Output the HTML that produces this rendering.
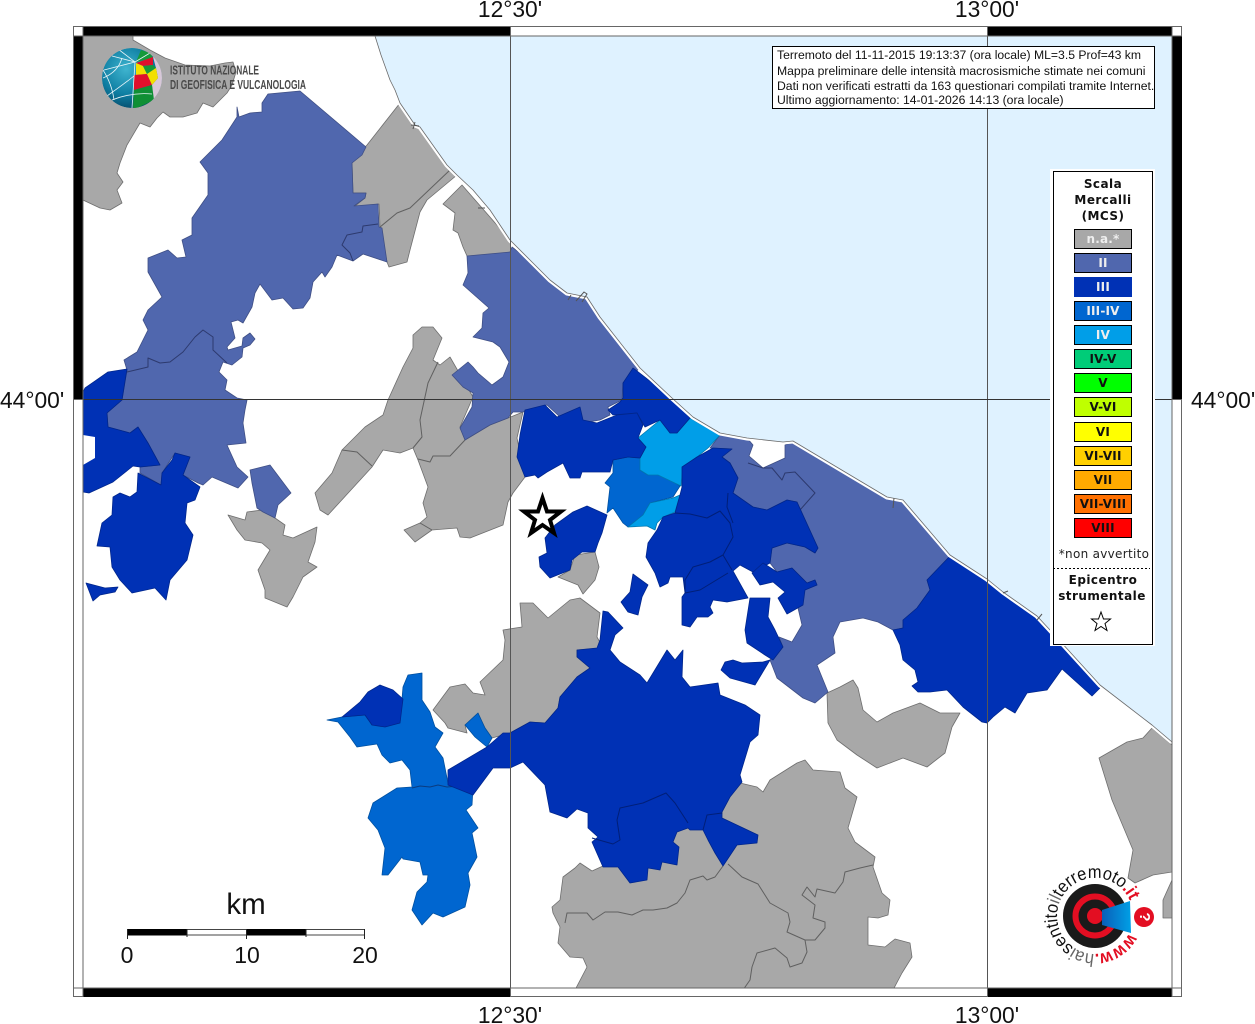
<!DOCTYPE html>
<html>
<head>
<meta charset="utf-8">
<title>Mappa intensità macrosismiche</title>
<style>
html,body{margin:0;padding:0;background:#fff;}
svg{display:block;}
.deg{font-family:"Liberation Sans",sans-serif;font-size:22.8px;fill:#111;}
.info{font-family:"Liberation Sans",sans-serif;font-size:12.2px;fill:#111;}
.leg{font-family:"DejaVu Sans",sans-serif;font-size:12px;font-weight:bold;fill:#111;text-anchor:middle;letter-spacing:.45px;}
.sw{font-family:"DejaVu Sans",sans-serif;font-size:12px;font-weight:bold;text-anchor:middle;fill:#111;letter-spacing:.2px;}
.g{fill:#a8a8a8;stroke:#6e6e6e;stroke-width:.8;stroke-linejoin:round;}
.b2{fill:#5067ae;stroke:#3f4f85;stroke-width:.8;stroke-linejoin:round;}
.b3{fill:#0031b5;stroke:#00268c;stroke-width:.8;stroke-linejoin:round;}
.b34{fill:#0066d0;stroke:#0050a0;stroke-width:.8;stroke-linejoin:round;}
.b4{fill:#009ee8;stroke:#0078b0;stroke-width:.8;stroke-linejoin:round;}
.lg{fill:none;stroke:#606060;stroke-width:1;stroke-linejoin:round;}
.l2{fill:none;stroke:#2d3a6e;stroke-width:1;stroke-linejoin:round;}
.l3{fill:none;stroke:#001f78;stroke-width:1;stroke-linejoin:round;}
</style>
</head>
<body>
<svg width="1255" height="1024" viewBox="0 0 1255 1024" xmlns="http://www.w3.org/2000/svg">
<defs>
<clipPath id="mapclip"><rect x="83" y="36" width="1089" height="952"/></clipPath>
<clipPath id="globe"><circle cx="132" cy="78" r="30"/></clipPath>
<radialGradient id="gb" cx=".4" cy=".35" r=".75">
<stop offset="0" stop-color="#3fb4cf"/><stop offset=".55" stop-color="#0f7fa3"/><stop offset="1" stop-color="#04405f"/>
</radialGradient>
<linearGradient id="cone" x1="0" x2="1" y1="0" y2="0">
<stop offset="0" stop-color="#0a5fb8"/><stop offset="1" stop-color="#00a0e6"/>
</linearGradient>
<path id="arc" d="M1129 933 A38 38 0 1 1 1130 901"/>
</defs>
<rect width="1255" height="1024" fill="#fff"/>
<g clip-path="url(#mapclip)">
<!-- gray NW -->
<polygon class="g" points="83,36 133,36 133,40 150,50 165,58 185,65 210,66 225,63 233,62 236,72 232,85 227,93 213,107 203,103 197,113 183,117 170,117 163,112 157,118 150,127 140,123 127,145 120,163 117,173 123,182 117,190 122,203 110,210 100,208 83,200"/>
<!-- gray N -->
<polygon class="g" points="400,103 367,145 365,147 352,163 353,193 366,193 365,198 354,207 379,204 380,227 387,262 389,267 407,262 410,250 420,212 427,200 457,175 447,165 420,127 415,125"/>
<polyline class="lg" points="380,227 397,213 410,208 450,170"/>
<polygon class="g" points="443,204 462,185 510,240 511,252 493,255 467,256 463,247 458,233 453,230 455,213"/>
<!-- gray central -->
<polygon class="g" points="413,335 422,327 433,327 442,338 433,360 440,365 450,357 473,397 460,427 465,440 490,425 508,418 523,412 517,438 525,477 513,493 508,502 503,525 470,538 460,537 457,528 432,530 415,542 404,530 420,523 427,517 423,503 428,487 418,460 413,448 400,453 383,450 372,467 328,515 320,510 315,493 332,473 342,450 365,427 383,415 388,400 403,367 413,348"/>
<polyline class="lg" points="438,362 428,383 420,420 422,437 413,448"/>
<polyline class="lg" points="418,459 430,462 433,456 450,456 465,440"/>
<polyline class="lg" points="342,450 357,452 372,466"/>
<polyline class="lg" points="420,523 432,530"/>
<!-- gray SW small -->
<polygon class="g" points="228,515 245,520 247,512 262,510 275,518 285,525 283,535 293,538 317,527 315,542 308,562 317,567 303,577 293,597 287,607 265,598 265,590 258,570 270,550 262,543 245,540 237,530"/>
<!-- gray centre S -->
<polygon class="g" points="520,603 533,603 548,618 570,600 580,598 600,613 597,637 603,648 577,650 577,657 590,668 577,677 560,697 558,708 545,723 530,722 510,733 492,738 485,728 478,713 465,725 467,733 448,728 445,723 433,710 450,687 465,684 473,693 485,695 480,682 503,660 505,640 503,630 522,627"/>
<polygon class="g" points="558,577 570,570 575,555 595,552 599,567 595,580 583,594 578,585"/>
<!-- gray S-central -->
<polygon class="g" points="827,693 840,687 853,680 858,688 863,710 877,722 893,713 920,703 940,713 960,713 952,727 945,753 927,767 903,758 877,768 857,755 837,740 828,723"/>
<!-- gray S -->
<polygon class="g" points="740,783 757,787 763,792 770,780 797,763 805,760 813,770 840,772 845,788 857,797 848,828 855,842 875,857 873,867 882,893 890,900 888,915 878,918 868,917 868,945 885,947 895,939 910,943 912,957 902,973 893,990 575,990 587,967 583,958 570,957 558,943 560,927 553,913 552,907 560,900 563,877 575,868 580,863 592,871 603,866 620,850 700,820"/>
<polyline class="lg" points="723,866 715,877 707,880 703,876 690,880 685,893 677,903 667,908 653,910 643,910 632,915 618,912 605,912 593,920 587,913 567,913 565,923"/>
<polyline class="lg" points="728,864 742,877 758,884 770,903 788,913 790,922 787,932 805,940 815,940 825,928 825,922 813,918 815,905 802,895 807,887 815,897 817,889 835,893 843,882 845,872 860,868 873,865"/>
<polyline class="lg" points="805,940 807,952 802,963 790,967 787,958 775,948 757,953 752,967 750,980 743,990"/>
<!-- gray SE -->
<polygon class="g" points="1152,728 1172,745 1172,872 1153,875 1135,883 1128,878 1133,850 1112,800 1099,758 1127,742 1143,738"/>
<polygon class="g" points="1172,880 1163,900 1163,918 1172,918"/>
<!-- II big NW -->
<polygon class="b2" points="268,94 300,91 366,147 362,155 352,163 353,193 366,193 365,198 354,206 378,204 379,227 382,228 387,262 363,254 353,261 337,255 332,267 325,277 322,272 313,282 310,298 303,308 293,309 283,298 272,300 260,284 255,293 252,307 243,323 238,320 231,322 235,338 227,347 228,350 242,346 243,338 250,333 255,339 250,345 243,348 242,357 232,365 223,362 219,372 227,380 225,390 237,398 247,400 245,410 243,423 246,443 227,445 237,467 248,477 238,488 212,477 203,485 198,483 183,475 190,457 175,453 162,473 161,485 140,473 140,467 160,465 148,443 138,427 130,433 108,427 107,413 122,400 127,370 124,360 137,352 148,330 143,320 148,310 162,297 148,272 148,258 168,250 177,258 186,257 182,240 192,235 192,218 208,195 208,173 200,162 222,140 237,117 237,107 239,117 250,113 262,112 262,103"/>
<polyline class="l2" points="127,372 148,367 148,358 160,363 170,362 183,352 195,337 203,330 213,337 213,350 227,363"/>
<polyline class="l2" points="378,224 363,226 362,232 347,235 342,245 350,253 353,261"/>
<polygon class="b2" points="250,470 270,465 291,493 278,505 275,518 263,512 257,508 252,483"/>
<!-- II coast -->
<polygon class="b2" points="467,256 510,252 512,247 533,263 550,280 567,293 587,297 600,317 640,368 623,383 622,400 608,407 610,415 600,420 583,423 580,408 560,417 547,405 523,412 513,412 508,418 490,425 465,440 460,428 472,407 473,393 463,387 452,375 468,362 473,367 478,373 492,385 503,377 509,362 500,347 493,342 473,337 482,328 483,313 489,308 463,285 468,273"/>
<!-- II east -->
<polygon class="b2" points="720,435 747,438 753,445 749,456 763,468 785,458 785,445 793,442 887,498 903,500 950,556 927,580 930,590 917,608 903,620 903,628 893,630 878,622 863,618 840,622 833,637 835,653 817,665 828,692 815,703 803,698 777,678 770,660 783,647 779,637 792,642 802,625 798,608 803,590 817,585 815,580 807,583 792,568 777,572 770,563 772,548 787,543 805,547 815,553 818,548 797,502 787,500 767,510 753,507 733,493 738,478 730,463 722,457 732,449 710,448"/>
<polyline class="l2" points="748,463 763,468 772,468 782,480 785,473 795,472 815,493 800,510"/>
<!-- III-IV west -->
<polygon class="b34" points="327,720 342,717 365,715 372,725 400,723 403,687 408,675 422,673 422,700 430,712 435,727 443,733 435,747 443,758 448,783 473,788 472,805 466,810 478,828 472,833 477,857 468,873 470,885 465,907 443,917 433,913 422,925 412,910 417,892 427,882 428,875 423,875 420,862 403,859 402,857 388,875 382,875 385,848 378,830 368,818 373,803 397,788 412,787 410,770 402,760 390,763 382,755 377,744 357,747 350,737 338,722"/>
<polyline class="l2" points="412,788 420,786 430,787 438,785 447,787 460,786 472,789" style="stroke:#0a3c80"/>
<polygon class="b34" points="465,725 478,713 485,728 492,738 487,747 475,737"/>
<!-- III-IV centre -->
<polygon class="b34" points="628,457 640,458 640,470 648,475 658,472 680,486 673,497 650,503 643,515 628,527 623,523 613,508 607,513 610,487 605,483 613,473 613,460"/>
<!-- IV -->
<polygon class="b4" points="638,438 660,420 670,433 677,433 690,418 720,435 708,448 697,457 683,467 681,486 658,475 648,475 640,470 640,458 646,447"/>
<polygon class="b4" points="628,527 643,515 650,503 673,498 680,495 675,512 663,517 657,523 655,530 647,526"/>
<!-- III all -->
<polygon class="b3" points="127,369 108,372 85,388 83,392 83,492 89,493 113,482 133,466 140,467 160,465 148,443 138,427 130,433 108,427 107,413 122,400"/>
<polygon fill="#fff" points="83,435 95,437 95,458 83,465"/>
<polygon class="b3" points="138,473 161,485 162,473 172,460 175,453 190,457 183,475 200,487 195,500 187,503 185,523 193,535 187,560 170,580 166,600 155,588 132,593 120,580 112,567 110,547 97,546 102,523 112,515 113,497 120,493 130,497 137,492"/>
<polygon class="b3" points="86,583 105,588 118,587 115,592 100,595 93,601"/>
<polygon class="b3" points="633,368 623,383 623,398 620,402 608,410 613,415 637,413 645,427 660,420 670,433 677,433 690,418 672,398"/>
<polygon class="b3" points="525,410 545,405 557,417 580,407 583,420 597,423 617,415 637,413 643,425 638,438 646,447 640,458 628,457 613,460 610,472 582,472 580,478 570,478 563,463 547,472 538,478 535,475 525,477 517,457 520,435"/>
<polygon class="b3" points="682,467 697,457 713,448 732,449 722,457 730,463 738,478 733,493 753,507 767,510 787,500 797,502 818,548 815,553 805,547 787,543 772,548 770,563 753,572 740,565 733,571 748,598 727,602 713,600 710,607 713,613 708,617 697,617 690,627 682,625 682,597 685,593 683,577 670,577 668,583 660,587 655,573 646,557 648,543 657,530 663,517 675,513 680,495 682,487"/>
<polyline class="l3" points="675,513 690,514 707,518 720,511 730,523 733,537 723,555 732,570"/>
<polyline class="l3" points="728,493 727,507 733,523"/>
<polyline class="l3" points="723,555 710,562 693,567 685,580 685,593 700,590 728,573"/>
<polygon class="b3" points="752,573 763,563 777,572 792,568 807,583 815,580 817,585 805,590 803,605 787,614 778,598 785,592 773,582 760,585"/>
<polygon class="b3" points="545,538 555,525 573,512 587,506 607,515 602,533 598,543 595,552 582,552 572,560 570,570 550,578 540,567 539,557 547,553"/>
<polygon class="b3" points="633,574 648,585 642,597 638,615 628,612 621,602 630,592"/>
<polygon class="b3" points="750,598 770,598 768,617 775,630 783,647 773,660 765,655 747,643 745,630"/>
<polygon class="b3" points="725,662 733,660 742,663 763,662 770,660 755,685 730,678 721,670"/>
<polygon class="b3" points="950,556 987,580 1003,593 1037,617 1101,687 1092,696 1062,669 1047,690 1027,693 1015,713 1005,707 993,717 987,723 982,722 963,707 947,690 930,692 918,692 912,686 918,682 915,670 903,660 900,645 893,630 903,628 903,620 917,608 930,590 927,580"/>
<!-- III west lobe -->
<polygon class="b3" points="342,717 360,702 368,692 380,685 393,690 403,699 400,723 385,727 372,725 365,715"/>
<!-- III south main -->
<polygon class="b3" points="603,611 608,612 623,628 615,635 610,650 620,662 640,675 647,683 667,650 675,660 683,650 682,677 690,687 718,683 720,695 745,705 760,715 758,735 750,742 740,775 742,782 730,797 722,812 722,818 758,835 757,843 737,845 723,866 715,853 708,840 703,830 690,830 688,828 677,832 673,842 679,847 677,865 662,862 660,870 648,868 647,880 630,883 618,867 603,867 592,842 598,837 588,828 588,813 577,809 567,818 550,812 545,785 523,762 510,768 493,768 473,795 448,785 448,770 487,747 503,733 510,733 530,722 545,723 558,708 560,697 577,677 590,668 577,657 577,650 597,648 600,640"/>
<polyline class="l3" points="592,838 613,844 620,840 617,820 620,808 643,803 666,793 675,803 688,823"/>
<polyline class="l3" points="707,815 722,813 707,815 703,830"/>
<!-- sea -->
<polyline points="375,36 381,55 390,80 395,90 400,103 415,125 420,127 447,165 457,175 473,190 490,210 510,240 533,263 550,280 567,293 587,297 600,317 640,368 672,398 693,417 720,433 747,438 783,442 793,441 887,497 903,500 950,555 987,579 1003,592 1037,616 1050,630 1100,685 1152,725 1172,742" fill="none" stroke="#fff" stroke-width="5"/>
<polygon points="375,36 381,55 390,80 395,90 400,103 415,125 420,127 447,165 457,175 473,190 490,210 510,240 533,263 550,280 567,293 587,297 600,317 640,368 672,398 693,417 720,433 747,438 783,442 793,441 887,497 903,500 950,555 987,579 1003,592 1037,616 1050,630 1100,685 1152,725 1172,742 1172,36" fill="#dff2ff" stroke="#6a6a6a" stroke-width=".8" stroke-linejoin="round"/>
<!-- harbours -->
<path d="M411 125l8 1M415 122l-2 7M478 208h7M568 300l3-5M576 301l8-9 3 2-5 8M894 498l-1 10M1003 593l5-2M1037 620l5-6" fill="none" stroke="#555" stroke-width="1"/>
<!-- grid -->
<path d="M510.500 36V988M987.500 36V988" stroke="#555" stroke-width="1" fill="none"/>
<path d="M83 399.500H1172" stroke="#333" stroke-width="1" fill="none"/>
</g>
<!-- frame -->
<rect x="73.500" y="26.500" width="1108" height="970" fill="none" stroke="#666" stroke-width="1"/>
<rect x="83" y="27" width="427" height="9" fill="#000"/>
<rect x="987" y="27" width="185" height="9" fill="#000"/>
<rect x="83" y="988" width="427" height="9" fill="#000"/>
<rect x="987" y="988" width="185" height="9" fill="#000"/>
<rect x="74" y="36" width="9" height="363" fill="#000"/>
<rect x="1172" y="36" width="10" height="363" fill="#000"/>
<path d="M83 27V997M1172 27V997M73 36H1182M73 988H1182M510.500 27V36M987.500 27V36M510.500 988V997M987.500 988V997M74 399.500H83M1172 399.500H1182" stroke="#666" stroke-width="1" fill="none"/>
<!-- degree labels -->
<text class="deg" x="510" y="17" text-anchor="middle">12°30'</text>
<text class="deg" x="987" y="17" text-anchor="middle">13°00'</text>
<text class="deg" x="510" y="1023" text-anchor="middle">12°30'</text>
<text class="deg" x="987" y="1023" text-anchor="middle">13°00'</text>
<text class="deg" x="0" y="408">44°00'</text>
<text class="deg" x="1191" y="408">44°00'</text>
<!-- INGV logo -->
<g clip-path="url(#globe)">
<circle cx="132" cy="78" r="30" fill="url(#gb)"/>
<polygon points="153,57 165,60 165,95 153,100 152,85 158,78 156,68" fill="#d8c8d8"/>
<polygon points="136,62 141,50 150,53 153,58" fill="#159a3a"/>
<polygon points="136,63 153,57 153,65 143,66" fill="#e0102c"/>
<polygon points="136,63 143,66 147,74 136,75" fill="#f2e000"/>
<polygon points="143,66 153,65 156,68 147,74" fill="#159a3a"/>
<polygon points="134,75 147,74 152,85 134,90" fill="#e0102c"/>
<polygon points="147,74 156,68 158,78 152,85" fill="#f2e000"/>
<polygon points="134,90 152,85 154,100 133,110" fill="#0f8f34"/>
<path d="M135 62 132 108M135 62 104 70M135 62 112 56M135 62 118 49M135 62 150 53M103 78Q118 72 122 58M107 96Q124 84 134 76M112 100Q132 92 152 94M103 70Q112 84 114 100" fill="none" stroke="#e8f4f8" stroke-width=".8"/>
</g>
<text x="170" y="74.500" font-family="'Liberation Sans',sans-serif" font-size="12.500" font-weight="bold" fill="#4a4a4a" textLength="89" lengthAdjust="spacingAndGlyphs">ISTITUTO NAZIONALE</text>
<text x="170" y="89" font-family="'Liberation Sans',sans-serif" font-size="12.500" font-weight="bold" fill="#4a4a4a" textLength="136" lengthAdjust="spacingAndGlyphs">DI GEOFISICA E VULCANOLOGIA</text>
<!-- info box -->
<rect x="772.500" y="46.500" width="382" height="62" fill="#fff" stroke="#000" stroke-width="1"/>
<text class="info" x="777" y="59">Terremoto del 11-11-2015 19:13:37 (ora locale) ML=3.5 Prof=43 km</text>
<text class="info" x="777" y="75">Mappa preliminare delle intensità macrosismiche stimate nei comuni</text>
<text class="info" x="777" y="90">Dati non verificati estratti da 163 questionari compilati tramite Internet.</text>
<text class="info" x="777" y="104">Ultimo aggiornamento: 14-01-2026 14:13 (ora locale)</text>
<!-- legend -->
<rect x="1050" y="169" width="105" height="477" fill="#fff"/>
<rect x="1053.500" y="171.500" width="99" height="473" fill="#fff" stroke="#000" stroke-width="1"/>
<text class="leg" x="1103" y="188">Scala</text>
<text class="leg" x="1103" y="204">Mercalli</text>
<text class="leg" x="1103" y="220">(MCS)</text>
<g stroke="#000" stroke-width="1">
<rect x="1074.500" y="229.500" width="57" height="19" fill="#a8a8a8"/>
<rect x="1074.500" y="253.500" width="57" height="19" fill="#5067ae"/>
<rect x="1074.500" y="277.500" width="57" height="19" fill="#0031b5" stroke="#0031b5"/>
<rect x="1074.500" y="301.500" width="57" height="19" fill="#0066d0"/>
<rect x="1074.500" y="325.500" width="57" height="19" fill="#009ee8"/>
<rect x="1074.500" y="349.500" width="57" height="19" fill="#00cc78"/>
<rect x="1074.500" y="373.500" width="57" height="19" fill="#00ff00"/>
<rect x="1074.500" y="397.500" width="57" height="19" fill="#bfff00"/>
<rect x="1074.500" y="422.500" width="57" height="19" fill="#ffff00"/>
<rect x="1074.500" y="446.500" width="57" height="19" fill="#ffd000"/>
<rect x="1074.500" y="470.500" width="57" height="19" fill="#ffaa00"/>
<rect x="1074.500" y="494.500" width="57" height="19" fill="#ff7000"/>
<rect x="1074.500" y="518.500" width="57" height="19" fill="#ff0000"/>
</g>
<text class="sw" x="1103" y="243" style="fill:#eee">n.a.*</text>
<text class="sw" x="1103" y="267" style="fill:#eee">II</text>
<text class="sw" x="1103" y="291" style="fill:#eee">III</text>
<text class="sw" x="1103" y="315" style="fill:#eee">III-IV</text>
<text class="sw" x="1103" y="339" style="fill:#eee">IV</text>
<text class="sw" x="1103" y="363">IV-V</text>
<text class="sw" x="1103" y="387">V</text>
<text class="sw" x="1103" y="411">V-VI</text>
<text class="sw" x="1103" y="436">VI</text>
<text class="sw" x="1103" y="460">VI-VII</text>
<text class="sw" x="1103" y="484">VII</text>
<text class="sw" x="1103" y="508">VII-VIII</text>
<text class="sw" x="1103" y="532">VIII</text>
<text x="1104" y="558" font-family="'DejaVu Sans',sans-serif" font-size="12" fill="#222" text-anchor="middle" letter-spacing=".3">*non avvertito</text>
<path d="M1053 568.500H1150" stroke="#000" stroke-width="1" stroke-dasharray="2 2"/>
<text class="leg" x="1103" y="584">Epicentro</text>
<text class="leg" x="1102" y="600">strumentale</text>
<polygon points="1101,612 1103.500,619 1110.500,619 1105,623.500 1107,630.500 1101,626.500 1095,630.500 1097,623.500 1091.500,619 1098.500,619" fill="#fff" stroke="#000" stroke-width="1"/>
<!-- epicentre star -->
<polygon points="542.500,498 547,511.500 561,511.500 550,520 554,533 542.500,525 531,533 535,520 524,511.500 538,511.500" fill="#fff" stroke="#000" stroke-width="4" stroke-linejoin="miter"/>
<!-- scale -->
<text x="246" y="914" font-family="'Liberation Sans',sans-serif" font-size="29.500" fill="#111" text-anchor="middle">km</text>
<rect x="127.500" y="929.500" width="237" height="5.500" fill="#fff" stroke="#444" stroke-width="1"/>
<rect x="127" y="929" width="60" height="6.500" fill="#000"/>
<rect x="246" y="929" width="60" height="6.500" fill="#000"/>
<path d="M127.500 929V939M187 929V937M246.500 929V939M306 929V937M364.500 929V939" stroke="#222" stroke-width="1"/>
<text x="127" y="963" font-family="'Liberation Sans',sans-serif" font-size="23" fill="#111" text-anchor="middle">0</text>
<text x="247" y="963" font-family="'Liberation Sans',sans-serif" font-size="23" fill="#111" text-anchor="middle">10</text>
<text x="365" y="963" font-family="'Liberation Sans',sans-serif" font-size="23" fill="#111" text-anchor="middle">20</text>
<!-- haisentito logo -->
<circle cx="1095" cy="916" r="32" fill="#1a1a1a"/>
<circle cx="1095" cy="916" r="19.500" fill="none" stroke="#e30e22" stroke-width="6"/>
<circle cx="1095" cy="916" r="8" fill="#e30e22"/>
<polygon points="1102,910 1130,901 1131,933 1102,925" fill="url(#cone)"/>
<circle cx="1144" cy="917" r="10" fill="#e30e22"/>
<text x="0" y="0" transform="translate(1140,917) rotate(90)" font-family="'Liberation Sans',sans-serif" font-size="15" font-weight="bold" fill="#fff" text-anchor="middle">?</text>
<text font-family="'Liberation Sans',sans-serif" font-size="18" fill="#111">
<textPath href="#arc" startOffset="0" textLength="205" lengthAdjust="spacingAndGlyphs"><tspan fill="#e30e22" font-weight="bold">www.</tspan><tspan fill="#666">hai</tspan><tspan>sentito</tspan><tspan fill="#666">il</tspan><tspan>terremoto</tspan><tspan fill="#e30e22" font-weight="bold">.it</tspan></textPath>
</text>
</svg>
</body>
</html>
